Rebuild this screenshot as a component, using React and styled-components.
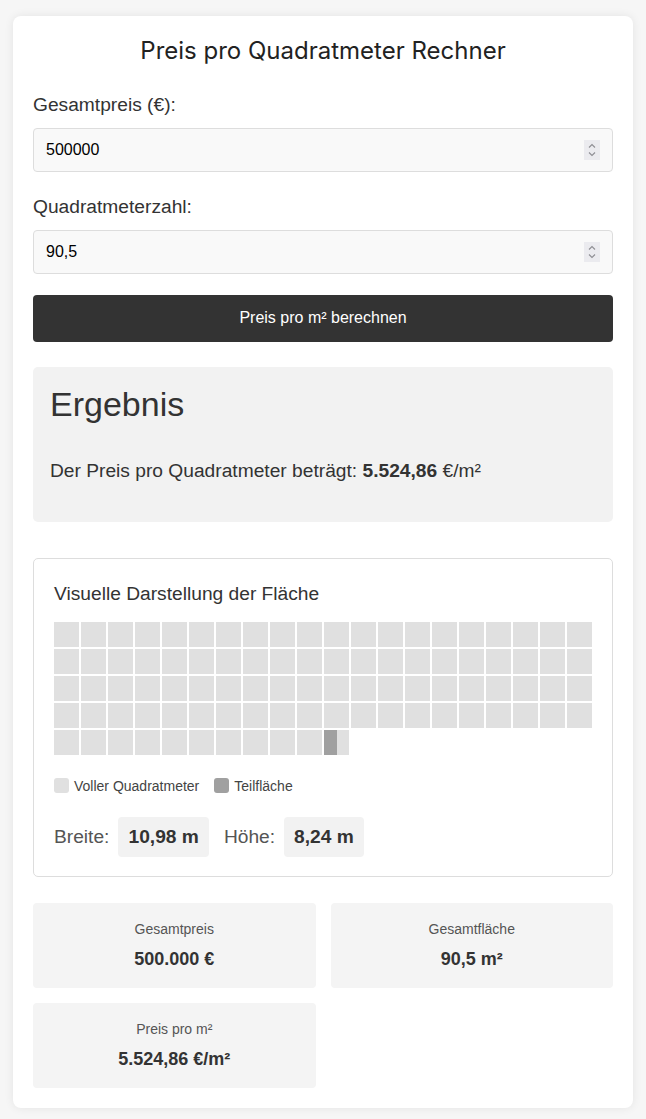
import React from "react";
import styled, { createGlobalStyle } from "styled-components";

const GlobalStyle = createGlobalStyle`
  html, body { margin: 0; padding: 0; }
  body {
    background: #f6f6f6;
    font-family: "Liberation Sans", Arial, sans-serif;
    color: #333;
  }
  * { box-sizing: border-box; }
`;

const Page = styled.div`
  padding: 16px 13px 12px;
`;

const Card = styled.div`
  background: #fff;
  border-radius: 8px;
  box-shadow: 0 0 10px rgba(0, 0, 0, 0.08);
  padding: 20px;
`;

const Title = styled.h1`
  margin: 0 0 29px;
  font-family: Inter, "Liberation Sans", sans-serif;
  font-weight: 400;
  font-size: 24px;
  line-height: 29px;
  text-align: center;
  color: #222;
`;

const Group = styled.div`
  margin-bottom: ${(p) => p.$mb}px;
`;

const Label = styled.label`
  display: block;
  font-size: 19.2px;
  line-height: 22px;
  margin-bottom: 11.5px;
  color: #333;
`;

const InputBox = styled.div`
  display: flex;
  align-items: center;
  height: 44.4px;
  padding: 0 12px;
  background: #f9f9f9;
  border: 1px solid #ddd;
  border-radius: 4px;
`;

const Field = styled.input`
  flex: 1;
  min-width: 0;
  border: none;
  outline: none;
  background: transparent;
  padding: 0;
  font-family: "Liberation Sans", Arial, sans-serif;
  font-size: 16px;
  color: #000;
`;

const Spinner = () => (
  <svg width="16" height="20" viewBox="0 0 16 20">
    <rect x="0" y="0" width="16" height="20" fill="#ebebef" />
    <path d="M5 7.5 L8 4.5 L11 7.5" fill="none" stroke="#8e8e93" strokeWidth="1.1" />
    <path d="M5 12.5 L8 15.5 L11 12.5" fill="none" stroke="#8e8e93" strokeWidth="1.1" />
  </svg>
);

const Button = styled.button`
  display: block;
  width: 100%;
  height: 46.4px;
  border: none;
  border-radius: 4px;
  background: #333;
  color: #fff;
  font-family: "Liberation Sans", Arial, sans-serif;
  font-size: 16px;
  cursor: pointer;
`;

const ResultBox = styled.div`
  margin-top: 25.6px;
  background: #f2f2f2;
  border-radius: 5px;
  padding: 18px 17px 40px;
`;

const ResultTitle = styled.h2`
  margin: 0 0 36px;
  font-size: 34px;
  line-height: 39px;
  font-weight: 400;
  color: #333;
`;

const ResultText = styled.p`
  margin: 0;
  font-size: 19.2px;
  line-height: 22px;
  color: #333;
`;

const Visual = styled.div`
  margin-top: 35.6px;
  border: 1px solid #ddd;
  border-radius: 5px;
  padding: 24px 20px 19px;
`;

const VisualTitle = styled.h3`
  margin: 0 0 17px;
  font-size: 19.2px;
  line-height: 22px;
  font-weight: 400;
  color: #333;
`;

const Grid = styled.div`
  display: grid;
  grid-template-columns: repeat(20, 1fr);
  gap: 2px;
`;

const Cell = styled.div`
  height: 25px;
  background: #e0e0e0;
  overflow: hidden;
`;

const CellFill = styled.div`
  height: 100%;
  background: #a0a0a0;
`;

const Legend = styled.div`
  display: flex;
  align-items: center;
  gap: 15px;
  margin-top: 23px;
  font-size: 14px;
  color: #444;
`;

const LegendItem = styled.div`
  display: flex;
  align-items: center;
  gap: 5px;
`;

const Swatch = styled.span`
  width: 15px;
  height: 15px;
  border-radius: 3px;
  background: ${(p) => p.$color};
`;

const DimRow = styled.div`
  display: flex;
  align-items: center;
  gap: 15px;
  margin-top: 23px;
`;

const DimItem = styled.div`
  display: flex;
  align-items: center;
  gap: 9px;
  font-size: 19.2px;
  color: #555;
`;

const DimValue = styled.span`
  background: #f2f2f2;
  border-radius: 4px;
  padding: 9px 10px;
  line-height: 22px;
  font-weight: 700;
  color: #333;
`;

const Stats = styled.div`
  display: grid;
  grid-template-columns: 1fr 1fr;
  gap: 15px;
  margin-top: 26px;
`;

const Stat = styled.div`
  background: #f4f4f4;
  border-radius: 4px;
  padding: 18px 10px;
  text-align: center;
`;

const StatLabel = styled.div`
  font-size: 14px;
  line-height: 16px;
  color: #555;
  margin-bottom: 12px;
`;

const StatValue = styled.div`
  font-size: 18px;
  line-height: 21px;
  font-weight: 700;
  color: #333;
`;

export default function App() {
  const area = 90.5;
  const full = Math.floor(area);
  const frac = area - full;
  const cells = [];
  for (let i = 0; i < full; i++) cells.push(<Cell key={i} />);
  if (frac > 0)
    cells.push(
      <Cell key="p">
        <CellFill style={{ width: `${frac * 100}%` }} />
      </Cell>
    );

  return (
    <>
      <GlobalStyle />
      <Page>
        <Card>
          <Title>Preis pro Quadratmeter Rechner</Title>
          <Group $mb={24.5}>
            <Label>Gesamtpreis (€):</Label>
            <InputBox>
              <Field type="text" defaultValue="500000" />
              <Spinner />
            </InputBox>
          </Group>
          <Group $mb={21}>
            <Label>Quadratmeterzahl:</Label>
            <InputBox>
              <Field type="text" defaultValue="90,5" />
              <Spinner />
            </InputBox>
          </Group>
          <Button>Preis pro m² berechnen</Button>

          <ResultBox>
            <ResultTitle>Ergebnis</ResultTitle>
            <ResultText>
              Der Preis pro Quadratmeter beträgt: <strong>5.524,86</strong> €/m²
            </ResultText>
          </ResultBox>

          <Visual>
            <VisualTitle>Visuelle Darstellung der Fläche</VisualTitle>
            <Grid>{cells}</Grid>
            <Legend>
              <LegendItem>
                <Swatch $color="#e0e0e0" />
                Voller Quadratmeter
              </LegendItem>
              <LegendItem>
                <Swatch $color="#a0a0a0" />
                Teilfläche
              </LegendItem>
            </Legend>
            <DimRow>
              <DimItem>
                Breite: <DimValue>10,98 m</DimValue>
              </DimItem>
              <DimItem>
                Höhe: <DimValue>8,24 m</DimValue>
              </DimItem>
            </DimRow>
          </Visual>

          <Stats>
            <Stat>
              <StatLabel>Gesamtpreis</StatLabel>
              <StatValue>500.000 €</StatValue>
            </Stat>
            <Stat>
              <StatLabel>Gesamtfläche</StatLabel>
              <StatValue>90,5 m²</StatValue>
            </Stat>
            <Stat>
              <StatLabel>Preis pro m²</StatLabel>
              <StatValue>5.524,86 €/m²</StatValue>
            </Stat>
          </Stats>
        </Card>
      </Page>
    </>
  );
}
